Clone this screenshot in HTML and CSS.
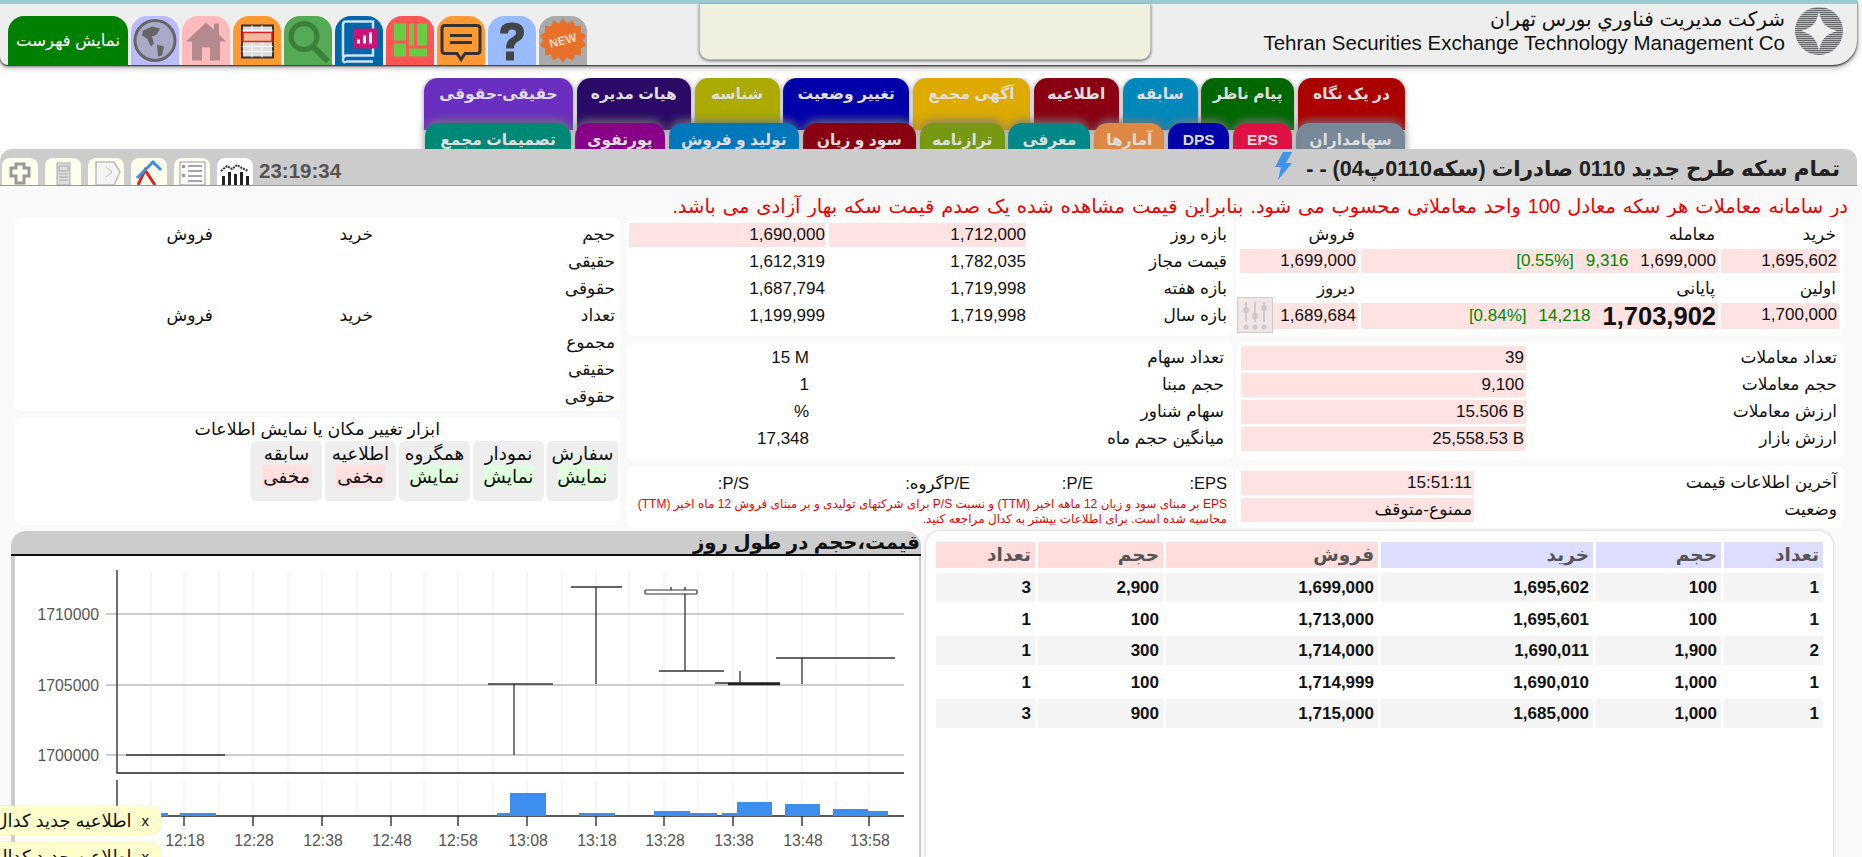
FILE: index.html
```html
<!DOCTYPE html>
<html lang="fa" dir="rtl">
<head>
<meta charset="utf-8">
<title>TSETMC</title>
<link rel="stylesheet" href="styles.css">
</head>
<body>
<header class="top">
  <div class="brand">
    <svg class="logo" viewBox="0 0 48 50">
      <defs><pattern id="st" width="3" height="2" patternUnits="userSpaceOnUse"><rect width="3" height="1.4" fill="#66686b"/></pattern></defs>
      <circle cx="24" cy="25" r="24" fill="url(#st)"/>
      <path d="M24 5C26 17 31 22 42 25C31 28 26 33 24 45C22 33 17 28 6 25C17 22 22 17 24 5Z" fill="#f0f0f0"/>
    </svg>
    <div class="brand-text">
      <div>شركت مديريت فناوري بورس تهران</div>
      <div class="en" dir="ltr">Tehran Securities Exchange Technology Management Co</div>
    </div>
  </div>
  <div class="note"></div>
  <nav class="tools" dir="ltr">
    <a class="menu-btn">نمایش فهرست</a>
    <a class="tool t-globe"><svg viewBox="0 0 48 48"><circle cx="24" cy="24" r="20" fill="#a9aac8" stroke="#666" stroke-width="3"/><path d="M12 14l9-4 8 2-3 6-5 2 2 7-3 3-4-8-5-3zM26 28l7 2-2 9-4 1z" fill="#666"/></svg></a>
    <a class="tool t-home"><svg viewBox="0 0 48 48"><path d="M24 6L4 25h6v19h10V31h8v13h10V25h6l-7-7V7h-5v6z" fill="#b58a8f"/></svg></a>
    <a class="tool t-table"><svg viewBox="0 0 48 48"><rect x="9" y="9" width="31" height="32" fill="#ddd" stroke="#333" stroke-width="2"/><path d="M9 14h31M9 30h31M9 35h31M19 9v32M29 9v32" stroke="#fff"/><rect x="10" y="16" width="29" height="9" fill="#f2b9a0" stroke="#d22" stroke-width="1.5"/></svg></a>
    <a class="tool t-search"><svg viewBox="0 0 48 48"><circle cx="20" cy="20" r="13" fill="none" stroke="#3a803a" stroke-width="5"/><path d="M29 30l13 13" stroke="#3a803a" stroke-width="6" stroke-linecap="round"/></svg></a>
    <a class="tool t-book"><svg viewBox="0 0 48 48"><path d="M8 40V8q0-3 3-3h27v34H12q-4 0-4 4t4 2h26" fill="none" stroke="#cfe3f2" stroke-width="2.5"/><rect x="18" y="12" width="25" height="20" fill="#cc1177"/><path d="M22 27v-4h3v4zM28 27v-8h3v8zM34 27V16h3v11z" fill="#fff"/></svg></a>
    <a class="tool t-grid"><svg viewBox="0 0 48 48"><path d="M8 7h12v17H8zM8 27h12v13H8zM23 7h5v22h-5zM31 7h10v22H31zM23 32h18v8H23z" fill="#66cc44"/></svg></a>
    <a class="tool t-chat"><svg viewBox="0 0 48 48"><path d="M8 9h32q3 0 3 3v22q0 3-3 3H28l-4 6-4-6H8q-3 0-3-3V12q0-3 3-3z" fill="none" stroke="#333" stroke-width="3"/><path d="M13 19h22M13 26h22" stroke="#333" stroke-width="3"/></svg></a>
    <a class="tool t-help"><svg viewBox="0 0 48 48"><path d="M12 17q0-11 12-11t12 10q0 6-6 9-4 2-4 7h-8q0-8 6-11 4-2 4-5 0-3-4-3t-4 4zM18 35h8v9h-8z" fill="#444"/></svg></a>
    <a class="tool t-new"><svg viewBox="0 0 48 48"><path d="M24 2l4 5 6-3 2 6 6-1 0 7 5 3-3 5 3 5-5 3 0 7-6-1-2 6-6-3-4 5-4-5-6 3-2-6-6 1 0-7-5-3 3-5-3-5 5-3 0-7 6 1 2-6 6 3z" fill="#e8702a"/><text x="24" y="28" class="new-txt" text-anchor="middle" transform="rotate(-15 24 24)">NEW</text></svg></a>
  </nav>
</header>

<div class="tabs">
  <div class="tab-row row1">
    <a class="tab c1">در یک نگاه</a><a class="tab c2">پیام ناظر</a><a class="tab c3">سابقه</a><a class="tab c4">اطلاعیه</a><a class="tab c5">آگهی مجمع</a><a class="tab c6">تغییر وضعیت</a><a class="tab c7">شناسه</a><a class="tab c8">هیات مدیره</a><a class="tab c9">حقیقی-حقوقی</a>
  </div>
  <div class="tab-row row2">
    <a class="tab d1">سهامداران</a><a class="tab d2">EPS</a><a class="tab d3">DPS</a><a class="tab d4">آمارها</a><a class="tab d5">معرفی</a><a class="tab d6">ترازنامه</a><a class="tab d7">سود و زیان</a><a class="tab d8">تولید و فروش</a><a class="tab d9">پورتفوی</a><a class="tab d10">تصمیمات مجمع</a>
  </div>
</div>

<div class="titlebar">
  <div class="title-main">
    <h1>تمام سکه طرح جدید 0110 صادرات (سکه0110پ04) - -</h1>
    <svg class="bolt" viewBox="0 0 22 30"><path d="M11 1h9L14 12h6L6 29l3-13H3z" fill="#3f93ee"/></svg>
  </div>
  <div class="title-tools" dir="ltr">
    <span class="mini"><svg viewBox="0 0 36 27"><path d="M14 10V6h8v4h5v8h-5v7h-8v-7H9v-8z" fill="none" stroke="#999" stroke-width="3"/></svg></span>
    <span class="mini"><svg viewBox="0 0 36 27"><rect x="12" y="5" width="13" height="22" fill="#ddd" stroke="#aaa"/><path d="M14 8h9v5h-9zM14 16h9M14 19h9M14 22h9" stroke="#aaa" fill="none"/></svg></span>
    <span class="mini"><svg viewBox="0 0 36 27"><path d="M8 4h18l6 10-6 13H8z" fill="#f4f4f4" stroke="#bbb" stroke-width="1.5"/><path d="M18 9l6 5-6 5" stroke="#bbb" fill="none"/></svg></span>
    <span class="mini"><svg viewBox="0 0 36 27"><path d="M7 27L14 12 24 27" stroke="#d22" stroke-width="3" fill="none"/><path d="M6 20L22 4l8 8" stroke="#3a8edd" stroke-width="3" fill="none"/></svg></span>
    <span class="mini"><svg viewBox="0 0 36 27"><rect x="6" y="4" width="25" height="23" fill="#fff" stroke="#999"/><path d="M14 8h14M14 13h14M14 18h14M14 23h14" stroke="#888" stroke-width="1.5"/><path d="M8 7h3v3H8zM8 16h3v3H8z" fill="#999"/></svg></span>
    <span class="mini white"><svg viewBox="0 0 36 27"><path d="M5 27v-9h3v9zM11 27V14h3v13zM17 27V16h3v11zM23 27V14h3v13zM29 27v-9h3v9z" fill="#222"/><path d="M4 13l6-5 5 3 5-4 5 3 6 3" fill="none" stroke="#333" stroke-width="2" stroke-dasharray="2 1"/></svg></span>
    <span class="clock">23:19:34</span>
  </div>
</div>

<main class="content">
  <p class="alert">در سامانه معاملات هر سکه معادل 100 واحد معاملاتی محسوب می شود. بنابراین قیمت مشاهده شده یک صدم قیمت سکه بهار آزادی می باشد.</p>

  <div class="columns">
    <div class="col">
      <section class="panel quote">
        <div class="lab">خرید</div><div class="lab">معامله</div><div class="lab">فروش</div>
        <div class="val">1,695,602</div>
        <div class="val split"><span>1,699,000</span><span class="up">9,316</span><span class="up">[0.55%]</span></div>
        <div class="val">1,699,000</div>
        <div class="lab end">اولین</div><div class="lab end">پایانی</div><div class="lab end">دیروز</div>
        <div class="val">1,700,000</div>
        <div class="val split"><span class="big">1,703,902</span><span class="up">14,218</span><span class="up">[0.84%]</span></div>
        <div class="val anchor">1,689,684
          <span class="mixer"><svg viewBox="0 0 34 34"><path d="M8 4v20M17 4v20M26 4v20" stroke="#d3c7c7" stroke-width="2"/><circle cx="8" cy="12" r="3" fill="#d3c7c7"/><circle cx="17" cy="18" r="3" fill="#d3c7c7"/><circle cx="26" cy="10" r="3" fill="#d3c7c7"/><circle cx="8" cy="29" r="2.5" fill="#d3c7c7"/><circle cx="17" cy="29" r="2.5" fill="#d3c7c7"/><circle cx="26" cy="29" r="2.5" fill="#d3c7c7"/></svg></span>
        </div>
      </section>
      <section class="panel stats">
        <div class="lab">تعداد معاملات</div><div class="val">39</div>
        <div class="lab">حجم معاملات</div><div class="val">9,100</div>
        <div class="lab">ارزش معاملات</div><div class="val">15.506 B</div>
        <div class="lab">ارزش بازار</div><div class="val">25,558.53 B</div>
      </section>
      <section class="panel status">
        <div class="lab">آخرین اطلاعات قیمت</div><div class="val">15:51:11</div>
        <div class="lab">وضعیت</div><div class="val">ممنوع-متوقف</div>
      </section>
    </div>

    <div class="col">
      <section class="panel ranges">
        <div class="lab">بازه روز</div><div class="val">1,712,000</div><div class="val">1,690,000</div>
        <div class="lab">قیمت مجاز</div><div class="num">1,782,035</div><div class="num">1,612,319</div>
        <div class="lab">بازه هفته</div><div class="num">1,719,998</div><div class="num">1,687,794</div>
        <div class="lab">بازه سال</div><div class="num">1,719,998</div><div class="num">1,199,999</div>
      </section>
      <section class="panel shares">
        <div class="lab">تعداد سهام</div><div class="num">15 M</div>
        <div class="lab">حجم مبنا</div><div class="num">1</div>
        <div class="lab">سهام شناور</div><div class="num">%</div>
        <div class="lab">میانگین حجم ماه</div><div class="num">17,348</div>
      </section>
      <section class="panel ratios">
        <div class="ratio-row"><span>EPS:</span><span>P/E:</span><span>P/Eگروه:</span><span>P/S:</span></div>
        <p class="fine">EPS بر مبنای سود و زیان 12 ماهه اخیر (TTM) و نسبت P/S برای شرکتهای تولیدی و بر مبنای فروش 12 ماه اخیر (TTM) محاسبه شده است. برای اطلاعات بیشتر به کدال مراجعه کنید.</p>
      </section>
    </div>

    <div class="col col-left">
      <section class="panel people">
        <div class="lab">حجم</div><div class="lab">خرید</div><div class="lab">فروش</div>
        <div class="lab">حقیقی</div><div></div><div></div>
        <div class="lab">حقوقی</div><div></div><div></div>
        <div class="lab">تعداد</div><div class="lab">خرید</div><div class="lab">فروش</div>
        <div class="lab">مجموع</div><div></div><div></div>
        <div class="lab">حقیقی</div><div></div><div></div>
        <div class="lab">حقوقی</div><div></div><div></div>
      </section>
      <section class="panel layout-tool">
        <div class="tool-head">ابزار تغییر مکان یا نمایش اطلاعات</div>
        <div class="cards">
          <div class="card"><div>سفارش</div><div class="show">نمایش</div></div>
          <div class="card"><div>نمودار</div><div class="show">نمایش</div></div>
          <div class="card"><div>همگروه</div><div class="show">نمایش</div></div>
          <div class="card"><div>اطلاعیه</div><div class="hide">مخفی</div></div>
          <div class="card"><div>سابقه</div><div class="hide">مخفی</div></div>
        </div>
      </section>
    </div>
  </div>

  <div class="lower">
    <section class="book">
      <div class="ob-row ob-head">
        <div class="buy">تعداد</div><div class="buy">حجم</div><div class="buy">خرید</div><div class="sell">فروش</div><div class="sell">حجم</div><div class="sell">تعداد</div>
      </div>
      <div class="ob-row"><div>1</div><div>100</div><div>1,695,602</div><div>1,699,000</div><div>2,900</div><div>3</div></div>
      <div class="ob-row"><div>1</div><div>100</div><div>1,695,601</div><div>1,713,000</div><div>100</div><div>1</div></div>
      <div class="ob-row"><div>2</div><div>1,900</div><div>1,690,011</div><div>1,714,000</div><div>300</div><div>1</div></div>
      <div class="ob-row"><div>1</div><div>1,000</div><div>1,690,010</div><div>1,714,999</div><div>100</div><div>1</div></div>
      <div class="ob-row"><div>1</div><div>1,000</div><div>1,685,000</div><div>1,715,000</div><div>900</div><div>3</div></div>
    </section>

    <section class="chart">
      <h2 class="chart-title">قیمت،حجم در طول روز</h2>
      <svg class="plot" viewBox="15 556 904 301">
        <g class="vgrid">
          <path d="M151 572V773M184 572V773M219 572V773M253 572V773M288 572V773M322 572V773M357 572V773M391 572V773M424 572V773M458 572V773M493 572V773M527 572V773M562 572V773M596 572V773M629 572V773M664 572V773M698 572V773M733 572V773M767 572V773M802 572V773M836 572V773M869 572V773"/>
          <path d="M151 781V816M184 781V816M219 781V816M253 781V816M288 781V816M322 781V816M357 781V816M391 781V816M424 781V816M458 781V816M493 781V816M527 781V816M562 781V816M596 781V816M629 781V816M664 781V816M698 781V816M733 781V816M767 781V816M802 781V816M836 781V816M869 781V816"/>
        </g>
        <path class="hgrid" d="M106 614H904M106 685H904M106 755H904"/>
        <path class="axis" d="M117 570V773H904M117 780V816H904M184 816V826M253 816V826M322 816V826M391 816V826M458 816V826M527 816V826M596 816V826M664 816V826M733 816V826M802 816V826M869 816V826"/>
        <path class="candle" d="M126 755H225M488 684H553M514 684V755M571 587H622M596 587V684M685 587V671M659 671H724M671 587V590M715 683H780M740 671V683M776 658H895M802 658V684"/>
        <rect class="body" x="645" y="590" width="52" height="4" rx="1"/>
        <path class="thick" d="M728 684H780"/>
        <g class="bars">
          <rect x="161" y="813" width="7" height="3"/><rect x="180" y="813" width="36" height="3"/>
          <rect x="497" y="813" width="13" height="3"/><rect x="510" y="793" width="36" height="23"/>
          <rect x="579" y="813" width="36" height="3"/><rect x="654" y="811" width="36" height="5"/>
          <rect x="690" y="813" width="27" height="3"/><rect x="722" y="813" width="15" height="3"/>
          <rect x="737" y="802" width="35" height="14"/><rect x="785" y="804" width="35" height="12"/>
          <rect x="833" y="809" width="35" height="7"/><rect x="868" y="811" width="20" height="5"/>
        </g>
        <g class="ticks" text-anchor="end">
          <text x="99" y="620">1710000</text><text x="99" y="691">1705000</text><text x="99" y="761">1700000</text>
        </g>
        <g class="ticks" text-anchor="middle">
          <text x="185" y="846">12:18</text><text x="254" y="846">12:28</text><text x="323" y="846">12:38</text><text x="392" y="846">12:48</text><text x="458" y="846">12:58</text><text x="528" y="846">13:08</text><text x="597" y="846">13:18</text><text x="665" y="846">13:28</text><text x="734" y="846">13:38</text><text x="803" y="846">13:48</text><text x="870" y="846">13:58</text>
        </g>
      </svg>
    </section>
  </div>
</main>

<aside class="toast first"><span class="close">x</span><span>اطلاعیه جدید کدال</span></aside>
<aside class="toast second"><span class="close">x</span><span>اطلاعیه جدید کدال</span></aside>
</body>
</html>
```
FILE: styles.css
```css
* { box-sizing: border-box; }
html, body { margin: 0; height: 857px; overflow: hidden; }
body { background: #fff; color: #111; font-family: "Liberation Sans", "DejaVu Sans", sans-serif; font-size: 16px; position: relative; }
p, h1, h2 { margin: 0; }

.top { height: 65px; margin-right: 5px; background: #eee; border-top: 4px solid #9cc8cf; border-bottom-right-radius: 24px; border-bottom-left-radius: 8px; box-shadow: 0 1px 2px #222, 0 2px 6px #999; display: flex; align-items: flex-start; }
.brand { flex: 0 0 706px; display: flex; align-items: flex-start; padding: 2px 14px 0 0; gap: 10px; }
.logo { width: 48px; height: 50px; flex: none; }
.brand-text { font-size: 20px; line-height: 24px; color: #111; padding-top: 1px; }
.brand-text .en { font-size: 20.5px; white-space: nowrap; }
.note { flex: 0 0 452px; height: 56px; background: #f0f0df; border: 1px solid #bbb; border-top: 0; border-radius: 0 0 10px 10px; box-shadow: 0 1px 3px #667; }
.tools { flex: 1; display: flex; gap: 3px; padding: 12px 0 0 8px; align-items: flex-end; height: 61px; }
.menu-btn { width: 120px; height: 49px; background: #008000; color: #fff; font-size: 16.5px; border-radius: 16px 16px 0 0; display: flex; align-items: center; justify-content: center; white-space: nowrap; }
.tool { width: 48px; height: 49px; border-radius: 16px 16px 0 0; display: block; }
.tool svg { width: 48px; height: 49px; display: block; }
.t-globe { background: #bbbbff; } .t-home { background: #ffbbbb; } .t-table { background: #ff9933; } .t-search { background: #55aa55; }
.t-book { background: #0066aa; } .t-grid { background: #ff5555; } .t-chat { background: #ff9933; } .t-help { background: #99bbff; } .t-new { background: #aaaaaa; }
.new-txt { font: bold 12px "Liberation Sans", sans-serif; fill: #f6d8c0; }

.tabs { height: 71px; margin-top: 13px; padding-right: 457px; overflow: hidden; }
.tab-row { display: grid; justify-content: start; }
.row1 { grid-template-columns: 107px 93px 75px 85px 117px 126px 85px 114px 149px; height: 52px; column-gap: 3.75px; }
.row2 { grid-template-columns: 109px 59px 61px 70px 82px 85px 113px 130px 90px 146px; height: 40px; margin-top: -7px; column-gap: 3.9px; }
.tab { border-radius: 14px 14px 0 0; color: #dedede; font-size: 15.5px; font-weight: bold; text-align: center; white-space: nowrap; overflow: hidden; }
.row1 .tab { line-height: 32px; box-shadow: 0 0 5px #999; }
.row2 .tab { line-height: 34px; box-shadow: 0 -3px 8px rgba(120, 120, 120, .85); }
.c1 { background: #aa0000; } .c2 { background: #006600; } .c3 { background: #0088bb; } .c4 { background: #880011; } .c5 { background: #ddaa00; }
.c6 { background: #0000aa; } .c7 { background: #aaaa00; } .c8 { background: #2a0a66; } .c9 { background: #6a2fc0; }
.d1 { background: #778899; } .d2 { background: #dd1144; } .d3 { background: #0000aa; } .d4 { background: #dd8844; } .d5 { background: #008888; }
.d6 { background: #779911; } .d7 { background: #880011; } .d8 { background: #0077bb; } .d9 { background: #880088; } .d10 { background: #008877; }

.titlebar { height: 37px; margin-right: 5px; background: #cccccc; border-radius: 12px 12px 0 0; border-bottom: 1px solid #999; display: flex; justify-content: space-between; align-items: stretch; position: relative; }
.title-main { display: flex; align-items: center; gap: 12px; padding-right: 17px; }
.title-main h1 { font-size: 21.5px; font-weight: bold; color: #222; white-space: nowrap; padding-top: 4px; }
.bolt { width: 22px; height: 30px; margin-bottom: 3px; }
.title-tools { display: flex; align-items: flex-end; gap: 7px; padding-left: 2px; }
.mini { width: 36px; height: 27px; background: #ffffee; border-radius: 8px 8px 0 0; display: block; }
.mini svg { width: 36px; height: 27px; display: block; }
.mini.white { background: #fff; }
.clock { font-size: 20.5px; font-weight: bold; color: #555; align-self: center; margin-bottom: -8px; margin-left: -1px; }

.content { background: #f9f9f9; height: 671px; }
.alert { height: 31px; padding: 9px 14px 0 0; color: #ee0000; font-size: 19.5px; word-spacing: 1.5px; line-height: 22px; white-space: nowrap; }
.columns { display: grid; grid-template-columns: 608px 607px 609px; column-gap: 3px; padding-right: 18px; }
.col { display: flex; flex-direction: column; gap: 6px; }
.col-left { padding-right: 3px; }
.panel { background: #fff; border-radius: 7px; }
.lab { font-size: 17px; line-height: 24px; padding-right: 3px; white-space: nowrap; }
.val { background: #ffe2e2; font-size: 17px; line-height: 24px; padding: 0 2px; white-space: nowrap; position: relative; unicode-bidi: plaintext; text-align: right; }
.num { font-size: 17px; line-height: 24px; padding: 0 2px; unicode-bidi: plaintext; text-align: right; }

.quote { height: 119px; padding: 6px 5px 0 4px; display: grid; grid-template-columns: 118px 357px 118px; grid-template-rows: 24px 24px 26px 26px; gap: 2px 3px; }
.end { align-self: end; }
.split { display: flex; gap: 12px; align-items: center; unicode-bidi: normal; }
.up { color: #080; font-size: 17px; }
.big { font-size: 25.5px; font-weight: bold; }
.anchor { line-height: 26px; }
.mixer { position: absolute; left: -3px; top: -6px; width: 36px; height: 36px; border: 1px solid #ccc; background: #efe6e6; }
.mixer svg { width: 34px; height: 34px; display: block; }

.stats { height: 118px; padding: 4px 4px 0 5px; display: grid; grid-template-columns: 314px 285px; grid-auto-rows: 24px; row-gap: 3px; }
.status { height: 62px; padding: 5px 4px 0 5px; display: grid; grid-template-columns: 366px 233px; grid-auto-rows: 24px; row-gap: 3px; }

.ranges { height: 119px; padding: 6px 3px 0 3px; display: grid; grid-template-columns: 200px 197px 196px; grid-auto-rows: 24px; row-gap: 3px; column-gap: 4px; }
.ranges .val, .ranges .num { padding: 0; }
.shares { height: 118px; padding: 4px 6px 0 0; display: grid; grid-template-columns: 418px 100px; grid-auto-rows: 24px; row-gap: 3px; }
.shares .num { padding: 0; }
.ratios { height: 62px; padding: 5px 6px 0 5px; }
.ratio-row { display: grid; grid-template-columns: 134px 123px 221px 1fr; font-size: 16.5px; line-height: 24px; }
.fine { color: #ee0000; font-size: 12px; line-height: 15px; margin-top: 2px; }

.people { height: 194px; padding: 4px 5px 0 0; display: grid; grid-template-columns: 242px 160px 1fr; grid-auto-rows: 27px; }
.people .lab { line-height: 27px; padding-right: 0; }
.layout-tool { height: 108px; padding: 1px 2px 0 0; }
.tool-head { font-size: 17.4px; line-height: 23px; padding-right: 178px; white-space: nowrap; }
.cards { display: flex; gap: 3px; }
.card { width: 71px; height: 60px; background: #eeeeee; border-radius: 5px; font-size: 18.5px; line-height: 23px; text-align: center; display: flex; flex-direction: column; align-items: center; padding-top: 1px; white-space: nowrap; }
.show { background: #dfffdf; width: 50px; }
.hide { background: #ffdfdf; width: 50px; }

.lower { display: flex; gap: 5px; margin-top: 3px; padding-right: 29px; height: 326px; align-items: flex-start; }
.book { flex: 0 0 907px; height: 326px; background: #fff; border-radius: 14px 14px 0 0; box-shadow: 0 0 3px #bbb; padding: 11px 10px 0; }
.ob-row { display: grid; grid-template-columns: 99px 125px 212px 212px 125px 99px; column-gap: 3px; height: 29px; margin-bottom: 2.5px; font-size: 17px; font-weight: bold; line-height: 29px; text-align: right; }
.ob-row > div { padding: 0 4px; }
.ob-row:nth-child(even) > div { background: #f4f4f4; }
.ob-head { height: 26px; margin-bottom: 5px; line-height: 26px; color: #555; font-size: 18.5px; }
.ob-head .buy { background: #ddddff; }
.ob-head .sell { background: #ffdddd; }

.chart { flex: 0 0 910px; height: 326px; }
.chart-title { height: 25px; background: #cccccc; border-radius: 15px 15px 0 0; border-bottom: 2px solid #111; font-size: 19.7px; font-weight: bold; line-height: 22px; color: #111; padding-right: 1px; white-space: nowrap; }
.plot { display: block; width: 910px; height: 301px; background: #fff; border-left: 4px solid #ccc; border-right: 2px solid #ccc; direction: ltr; }
.vgrid path { stroke: #eeeeee; stroke-width: 1; fill: none; }
.hgrid { stroke: #999; stroke-width: 1.2; fill: none; }
.axis { stroke: #222; stroke-width: 1.3; fill: none; }
.candle { stroke: #333; stroke-width: 1.3; fill: none; }
.body { fill: #fff; stroke: #333; stroke-width: 1.2; }
.thick { stroke: #222; stroke-width: 2.5; fill: none; }
.bars rect { fill: #3d8eed; }
.ticks text { font: 15.8px "Liberation Sans", sans-serif; fill: #555; }

.toast { position: absolute; left: -40px; width: 201px; height: 29px; background: #ffffcc; border-radius: 10px; box-shadow: 0 0 2px #ddd; display: flex; gap: 10px; padding-right: 12px; align-items: center; font-size: 18px; white-space: nowrap; overflow: hidden; }
.close { font-size: 15px; }
.first { top: 806px; }
.second { top: 842px; }
```
